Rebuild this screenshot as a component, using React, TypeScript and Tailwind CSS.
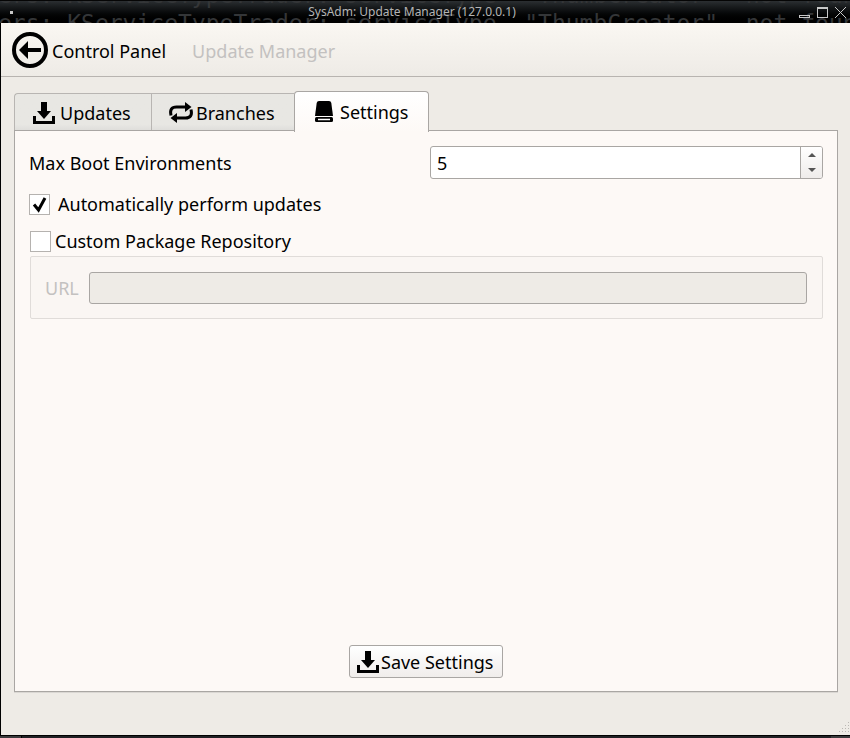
import { useState } from 'react';

const terminalLine = 'ers: KServiceTypeTrader: serviceType  "ThumbCreator"  not found';

function DownloadIcon() {
  return (
    <svg width="22" height="24" viewBox="0 0 22 24" aria-hidden="true" className="shrink-0">
      <path d="M8 1h6v9h4l-7 8-7-8h4z" />
      <path d="M0 15h3v5h16v-5h3v8H0z" />
    </svg>
  );
}

function LoopIcon() {
  return (
    <svg width="26" height="24" viewBox="0 0 26 24" aria-hidden="true" className="shrink-0">
      <g fill="none" stroke="#000" strokeWidth="3">
        <path d="M3 14.500Q1 6 8.500 6H20" />
        <path d="M23 8.500Q25 17 17.500 17H6" />
      </g>
      <path d="M17 1l6.500 5-6.500 5z" />
      <path d="M9 12l-6.500 5L9 22z" />
    </svg>
  );
}

function DriveIcon() {
  return (
    <svg width="18" height="24" viewBox="0 0 18 24" aria-hidden="true" className="shrink-0">
      <path d="M4 1h10q2 0 2.300 2L18 16H0L1.700 3Q2 1 4 1z" />
      <rect x="0" y="17" width="18" height="5" rx="1.500" />
      <path d="M3 19.500h12" stroke="#fff" strokeWidth="1.500" />
    </svg>
  );
}

function BackIcon() {
  return (
    <svg width="36" height="36" viewBox="0 0 36 36" aria-hidden="true" className="shrink-0">
      <circle cx="18" cy="18" r="16" fill="none" stroke="#000" strokeWidth="4" />
      <path d="M7 18l9-9v7h13v4H16v7z" />
    </svg>
  );
}

function TitleBar() {
  return (
    <header className="relative flex h-[23px] shrink-0 items-center overflow-hidden border-t border-[#050505] bg-linear-to-b from-[#2b2f32] to-black pr-1 pl-2.5">
      <div
        aria-hidden="true"
        className="absolute top-[-20px] left-[-2px] font-['DejaVu_Sans_Mono',monospace] text-[23px] leading-7 whitespace-pre text-[#343638]"
      >
        <div>{terminalLine}</div>
        <div>{terminalLine}</div>
      </div>
      <span className="relative size-[3px] bg-[#c8c8c8]" />
      <h1 className="relative flex-1 pl-3 text-center text-xs leading-4 text-[#b4b4b4]">
        SysAdm: Update Manager (127.0.0.1)
      </h1>
      <div className="relative flex items-center gap-[7px]">
        <button type="button" aria-label="Minimize" className="mt-2 h-[3px] w-[11px] border border-[#c8c8c8]" />
        <button type="button" aria-label="Maximize" className="size-[11px] border border-t-2 border-[#c8c8c8]" />
        <button type="button" aria-label="Close">
          <svg width="11" height="11" viewBox="0 0 11 11" className="block" stroke="#c8c8c8">
            <path d="M0 0l11 11M11 0L0 11" />
          </svg>
        </button>
      </div>
    </header>
  );
}

const tabs = [
  { name: 'Updates', icon: <DownloadIcon />, box: 'w-[137px] gap-[5px] pl-[18px] rounded-tl' },
  { name: 'Branches', icon: <LoopIcon />, box: 'w-[143px] gap-0.5 pl-4' },
  { name: 'Settings', icon: <DriveIcon />, box: 'w-[135px] gap-[7px] pl-5' },
];

function TickBox({ id, checked, onChange }: { id: string; checked: boolean; onChange: () => void }) {
  return (
    <span className="grid size-[21px] shrink-0">
      <input
        id={id}
        type="checkbox"
        checked={checked}
        onChange={onChange}
        className="col-start-1 row-start-1 size-[21px] appearance-none border border-[#b5b2af] bg-white"
      />
      {checked && (
        <svg width="21" height="21" viewBox="0 0 21 21" aria-hidden="true" className="pointer-events-none col-start-1 row-start-1">
          <path d="M5 10.500l4.500 5.500L16 4" fill="none" stroke="#000" strokeWidth="3" />
        </svg>
      )}
    </span>
  );
}

export default function App() {
  const [count, setCount] = useState(5);
  const [automatic, setAutomatic] = useState(true);
  const [custom, setCustom] = useState(false);

  return (
    <div className="flex min-h-screen flex-col bg-black font-['Noto_Sans',sans-serif] text-lg leading-6 text-black">
      <TitleBar />
      <div className="ml-px flex flex-1 flex-col bg-[#eeebe6]">
        <nav className="flex h-[54px] items-center border-b border-[#b8b4b0] bg-linear-to-b from-[#faf7f2] to-[#eeebe6] px-[11px]">
          <button type="button" className="flex items-center gap-1">
            <BackIcon />
            <span className="pt-0.5">Control Panel</span>
          </button>
          <span className="ml-[26px] pt-0.5 text-[#c3c1c0]">Update Manager</span>
        </nav>

        <main className="mt-3.5 flex flex-1 flex-col pr-3 pl-[13px]">
          <div role="tablist" className="z-10 -mb-0.5 flex items-end">
            {tabs.map((tab) => {
              const active = tab.name === 'Settings';
              return (
                <button
                  key={tab.name}
                  type="button"
                  role="tab"
                  aria-selected={active}
                  className={`flex items-center ${tab.box} ${
                    active
                      ? 'h-[41px] rounded-t border border-b-0 border-[#a9a6a3] bg-linear-to-b from-white to-[#fdf9f6]'
                      : 'mb-0.5 h-[37px] border-t border-l border-[#b8b5b2] bg-linear-to-b from-[#e8e7e3] from-85% to-[#dfdedb] pt-0.5'
                  }`}
                >
                  {tab.icon}
                  {tab.name}
                </button>
              );
            })}
          </div>

          <section
            role="tabpanel"
            className="flex flex-1 flex-col border border-[#a9a6a3] bg-[#fdf9f6] px-3.5 pt-[15px] pb-[13px] shadow-[0_1px_0_#dad7d3]"
          >
            <div className="flex items-center gap-2.5">
              <label htmlFor="max-boot" className="flex-1">Max Boot Environments</label>
              <div className="flex h-[33px] flex-1 overflow-hidden rounded-[3px] border border-[#a9a6a3] bg-white">
                <input
                  id="max-boot"
                  type="number"
                  value={count}
                  onChange={(event) => setCount(Number(event.target.value))}
                  className="min-w-0 flex-1 appearance-none px-1.5 outline-none [-moz-appearance:textfield] [&::-webkit-inner-spin-button]:appearance-none"
                />
                <div className="flex w-[22px] flex-col items-center justify-center gap-[11px] border-l border-[#a9a6a3] bg-linear-to-b from-white to-[#efecea]">
                  <button type="button" aria-label="Increase" onClick={() => setCount(count + 1)}>
                    <svg width="8" height="4" viewBox="0 0 8 4" className="block" fill="#555"><path d="M0 4l4-4 4 4z" /></svg>
                  </button>
                  <button type="button" aria-label="Decrease" onClick={() => setCount(count - 1)}>
                    <svg width="8" height="4" viewBox="0 0 8 4" className="block" fill="#555"><path d="M0 0l4 4 4-4z" /></svg>
                  </button>
                </div>
              </div>
            </div>

            <div className="mt-[13px] flex items-center gap-2">
              <TickBox id="automatic" checked={automatic} onChange={() => setAutomatic(!automatic)} />
              <label htmlFor="automatic">Automatically perform updates</label>
            </div>

            <div className="mt-[13px] flex items-center gap-1 pl-px">
              <TickBox id="custom" checked={custom} onChange={() => setCustom(!custom)} />
              <label htmlFor="custom">Custom Package Repository</label>
            </div>

            <div className="mt-[3px] ml-px flex h-[63px] items-center gap-2.5 rounded-xs border border-[#e0dcd9] bg-[#faf6f3] pr-[15px] pl-3.5">
              <label htmlFor="url" className="text-[#c3c1c0]">URL</label>
              <input
                id="url"
                type="text"
                disabled={!custom}
                className="h-8 min-w-0 flex-1 rounded-[3px] border border-[#a9a6a3] bg-[#eeebe6] px-1.5"
              />
            </div>

            <button
              type="button"
              className="mt-auto flex h-[33px] w-[154px] items-center gap-0.5 self-center rounded-[3px] border border-[#a9a6a3] bg-linear-to-b from-white to-[#f0edeb] pl-[7px]"
            >
              <DownloadIcon />
              Save Settings
            </button>
          </section>
        </main>

        <footer className="flex h-[43px] items-end justify-end pb-0.5">
          <svg width="11" height="11" viewBox="0 0 11 11" aria-hidden="true" fill="#bbb8b4">
            <path d="M9 0h1v1H9zM6 3h1v1H6zM9 3h1v1H9zM3 6h1v1H3zM6 6h1v1H6zM9 6h1v1H9zM0 9h1v1H0zM3 9h1v1H3zM6 9h1v1H6zM9 9h1v1H9z" />
          </svg>
        </footer>
      </div>
      <div className="flex h-[3px] justify-between border-t border-black bg-[#202024]">
        <span className="w-[22px] border-r border-black bg-[#3a3a3c]" />
        <span className="w-[19px] bg-[#3a3a3c]" />
      </div>
    </div>
  );
}
